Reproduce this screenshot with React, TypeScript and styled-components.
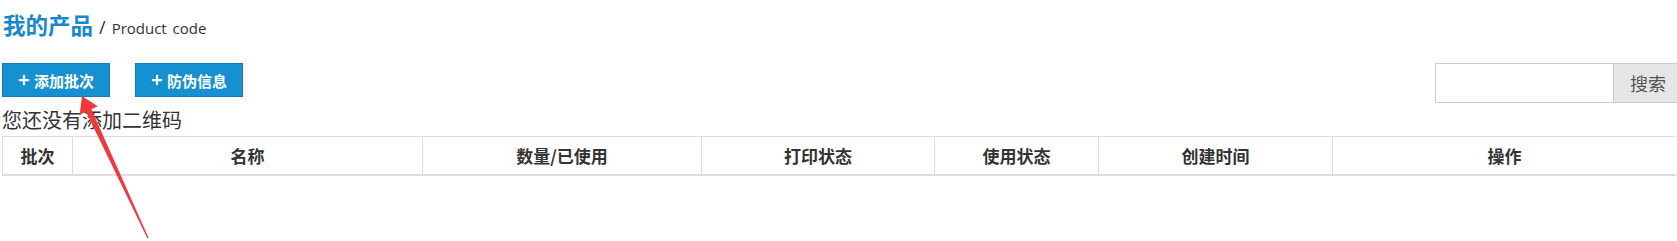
import React, { useState } from "react";
import styled, { createGlobalStyle } from "styled-components";
import { FaPlus } from "react-icons/fa";

const GlobalStyle = createGlobalStyle`
  html, body {
    margin: 0;
    padding: 0;
    background: #ffffff;
    overflow: hidden;
  }
  body {
    font-family: "Open Sans", "Noto Sans CJK SC", sans-serif;
    color: #333333;
  }
`;

const columns = [
  { title: "批次", width: 70 },
  { title: "名称", width: 350 },
  { title: "数量/已使用", width: 279 },
  { title: "打印状态", width: 233 },
  { title: "使用状态", width: 164 },
  { title: "创建时间", width: 234 },
  { title: "操作", width: 0 },
];

const App = () => {
  const [keyword, setKeyword] = useState("");

  return (
    <Page>
      <GlobalStyle />
      <TitleRow>
        <Title>我的产品</Title>
        <Slash>/</Slash>
        <Crumb>Product code</Crumb>
      </TitleRow>

      <Toolbar>
        <ActionButton>
          <FaPlus size={12} />
          添加批次
        </ActionButton>
        <ActionButton>
          <FaPlus size={12} />
          防伪信息
        </ActionButton>
        <SearchForm onSubmit={(e) => e.preventDefault()}>
          <SearchInput value={keyword} onChange={(e) => setKeyword(e.target.value)} />
          <SearchButton type="submit">搜索</SearchButton>
        </SearchForm>
      </Toolbar>

      <Message>您还没有添加二维码</Message>

      <Table>
        <thead>
          <tr>
            {columns.map((c) => (
              <HeadCell key={c.title} $width={c.width}>
                {c.title}
              </HeadCell>
            ))}
          </tr>
        </thead>
      </Table>

      {/* red annotation arrow over the page */}
      <Pointer width="80" height="150" viewBox="0 0 80 150">
        <polygon
          points="4,1 19.75,11.3 13.4,14.24 70.5,142.7 69.3,143.3 8,16.76 1.65,19.7"
          fill="#f0393b"
        />
      </Pointer>
    </Page>
  );
};

const Page = styled.div`
  position: relative;
  padding: 0 0 0 2px;
  height: 241px;
`;

const TitleRow = styled.div`
  display: flex;
  align-items: baseline;
  padding-top: 9px;
  height: 30px;
  line-height: 30px;
`;

const Title = styled.h1`
  margin: 0 6px 0 1px;
  font-family: "Noto Sans CJK SC", sans-serif;
  font-size: 22.5px;
  font-weight: 700;
  color: #1787cf;
`;

const Slash = styled.span`
  margin-right: 6px;
  font-family: "Open Sans", sans-serif;
  font-size: 18px;
  color: #333333;
`;

const Crumb = styled.span`
  font-family: "Open Sans", sans-serif;
  font-size: 15px;
  word-spacing: 2px;
  color: #333333;
`;

const Toolbar = styled.div`
  display: flex;
  align-items: flex-start;
  gap: 25px;
  height: 34px;
  margin-top: 24px;
`;

const ActionButton = styled.button`
  display: flex;
  align-items: center;
  justify-content: center;
  gap: 4px;
  width: 108px;
  height: 34px;
  padding: 0;
  border: 1px solid #0f7dbd;
  background: #1590d1;
  color: #ffffff;
  font-family: "Noto Sans CJK SC", sans-serif;
  font-size: 15px;
  font-weight: 700;
  cursor: pointer;
`;

const SearchForm = styled.form`
  display: flex;
  margin: 0 0 0 auto;
  height: 40px;
`;

const SearchInput = styled.input`
  box-sizing: border-box;
  width: 178px;
  height: 40px;
  border: 1px solid #cccccc;
  border-right: none;
  outline: none;
  padding: 0 8px;
  font-size: 16px;
`;

const SearchButton = styled.button`
  box-sizing: border-box;
  width: 64px;
  height: 40px;
  border: 1px solid #cccccc;
  border-right: none;
  background: #e6e6e6;
  color: #555555;
  font-family: "Noto Sans CJK SC", sans-serif;
  font-size: 18px;
  padding: 0 0 0 16px;
  text-align: left;
`;

const Message = styled.div`
  padding-top: 9px;
  line-height: 28px;
  margin-bottom: 2px;
  font-family: "Noto Sans CJK SC", sans-serif;
  font-size: 20px;
  color: #333333;
`;

const Table = styled.table`
  width: calc(100% - 1px);
  border-collapse: collapse;
  table-layout: fixed;
  border-top: 1px solid #dddddd;
  border-left: 1px solid #dddddd;
  border-bottom: 2px solid #dddddd;
`;

const HeadCell = styled.th<{ $width: number }>`
  ${(p) => (p.$width ? `width: ${p.$width}px;` : "")}
  box-sizing: border-box;
  height: 38px;
  padding: 0;
  border-right: 1px solid #dddddd;
  text-align: center;
  font-family: "Noto Sans CJK SC", sans-serif;
  font-size: 17px;
  font-weight: 700;
  color: #333333;
  &:last-child {
    border-right: none;
  }
`;

const Pointer = styled.svg`
  position: absolute;
  left: 78px;
  top: 95px;
  pointer-events: none;
`;

export default App;
